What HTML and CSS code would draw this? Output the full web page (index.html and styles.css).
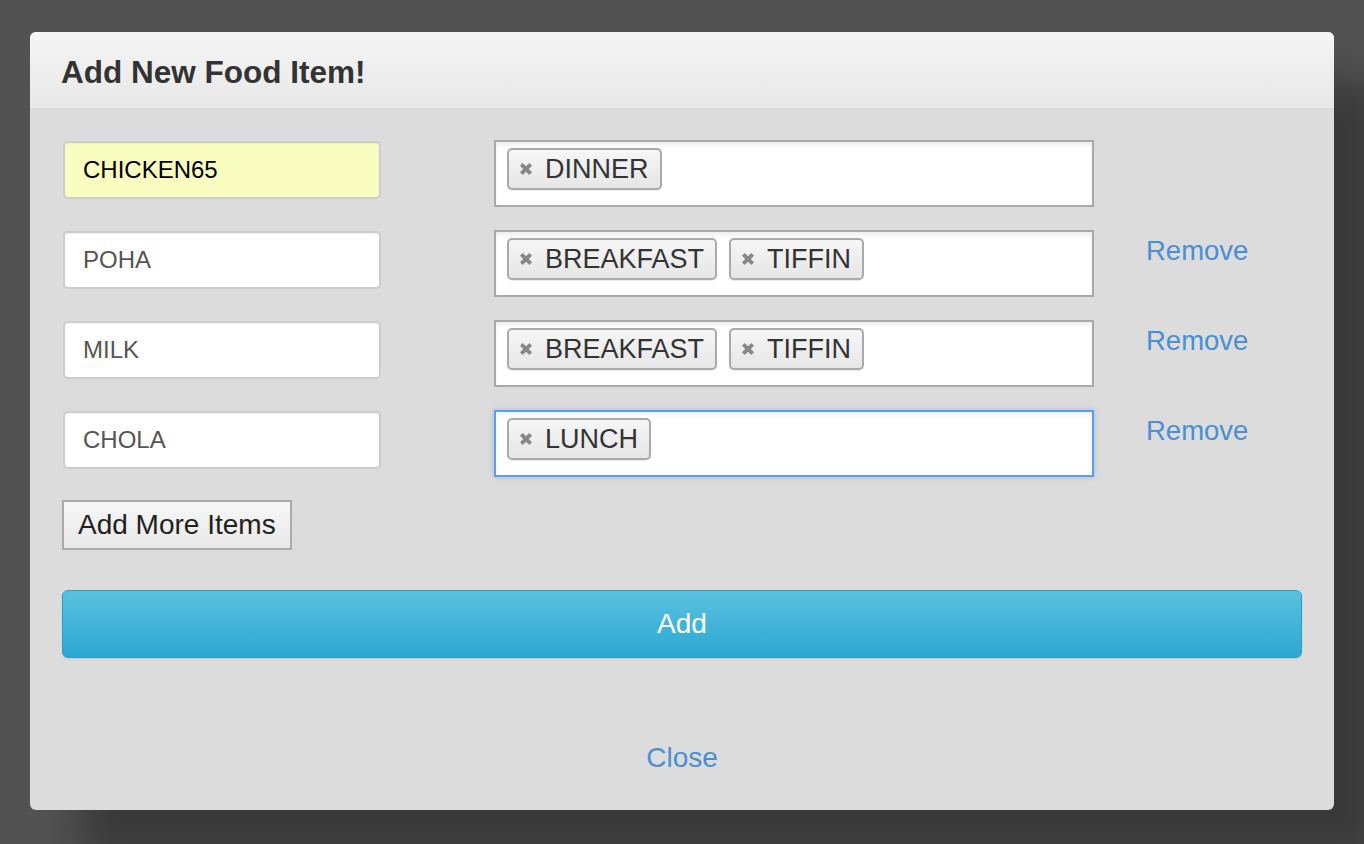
FILE: index.html
```html
<!DOCTYPE html>
<html>
<head>
<meta charset="utf-8">
<link rel="stylesheet" href="styles.css">
</head>
<body>
<div class="modal">
  <div class="modal-header"><h3 class="title">Add New Food Item!</h3></div>
  <div class="modal-body">
    <div class="rows">
      <div class="row">
        <div class="text-input autofill">CHICKEN65</div>
        <div class="tags-input">
          <span class="tag"><svg class="x" viewBox="0 0 12 12"><path d="M2 2L10 10M10 2L2 10"/></svg>DINNER</span>
        </div>
      </div>
      <div class="row">
        <div class="text-input">POHA</div>
        <div class="tags-input">
          <span class="tag"><svg class="x" viewBox="0 0 12 12"><path d="M2 2L10 10M10 2L2 10"/></svg>BREAKFAST</span>
          <span class="tag"><svg class="x" viewBox="0 0 12 12"><path d="M2 2L10 10M10 2L2 10"/></svg>TIFFIN</span>
        </div>
        <a class="remove">Remove</a>
      </div>
      <div class="row">
        <div class="text-input">MILK</div>
        <div class="tags-input">
          <span class="tag"><svg class="x" viewBox="0 0 12 12"><path d="M2 2L10 10M10 2L2 10"/></svg>BREAKFAST</span>
          <span class="tag"><svg class="x" viewBox="0 0 12 12"><path d="M2 2L10 10M10 2L2 10"/></svg>TIFFIN</span>
        </div>
        <a class="remove">Remove</a>
      </div>
      <div class="row">
        <div class="text-input">CHOLA</div>
        <div class="tags-input focused">
          <span class="tag"><svg class="x" viewBox="0 0 12 12"><path d="M2 2L10 10M10 2L2 10"/></svg>LUNCH</span>
        </div>
        <a class="remove">Remove</a>
      </div>
    </div>
    <button class="more-btn">Add More Items</button>
    <button class="add-btn">Add</button>
  </div>
  <div class="modal-footer"><a class="close">Close</a></div>
</div>
</body>
</html>
```

FILE: styles.css
```css
html, body {
  margin: 0;
  height: 100%;
}
body {
  background: #525252;
  font-family: "Liberation Sans", Arial, Helvetica, sans-serif;
  padding: 32px 30px 0;
  box-sizing: border-box;
  overflow: hidden;
}
.modal {
  width: 1304px;
  height: 778px;
  background: #dcdcdc;
  border-radius: 6px;
  box-shadow: 50px 50px 40px rgba(0, 0, 0, 0.3);
  display: flex;
  flex-direction: column;
  overflow: hidden;
}
.modal-header {
  height: 76px;
  box-sizing: border-box;
  background: linear-gradient(#f5f5f5, #e8e8e8);
  padding-left: 31px;
  display: flex;
  align-items: center;
}
.title {
  margin: 5px 0 0;
  font-size: 31.5px;
  font-weight: bold;
  color: #333;
}
.modal-body {
  padding: 32px 32px 0;
  display: flex;
  flex-direction: column;
  align-items: flex-start;
}
.rows {
  display: flex;
  flex-direction: column;
  gap: 23px;
}
.row {
  display: flex;
  align-items: flex-start;
  height: 67px;
}
.text-input {
  width: 318px;
  height: 58px;
  margin-top: 1px;
  margin-left: 1px;
  box-sizing: border-box;
  border: 2px solid #cdcdcd;
  border-radius: 5px;
  background: #fff;
  padding-left: 18px;
  display: flex;
  align-items: center;
  font-size: 24px;
  color: #555;
  box-shadow: inset 0 1px 2px rgba(0,0,0,0.06);
}
.text-input.autofill {
  background: #fafdc0;
  color: #000;
}
.tags-input {
  width: 600px;
  height: 67px;
  margin-left: 113px;
  box-sizing: border-box;
  border: 2px solid #a9a9a9;
  background: #fff;
  box-shadow: inset 0 3px 4px rgba(0,0,0,0.07);
  padding: 6px 0 0 11px;
  display: flex;
  align-items: flex-start;
  gap: 12px;
}
.tags-input.focused {
  border-color: #5e9cee;
  box-shadow: 0 0 5px rgba(94,156,238,0.5), inset 0 3px 4px rgba(0,0,0,0.07);
}
.tag {
  display: inline-flex;
  align-items: center;
  height: 42px;
  box-sizing: border-box;
  padding: 0 11px 0 10px;
  border: 2px solid #aaa;
  border-radius: 5px;
  background: linear-gradient(#f6f6f6, #e6e6e6);
  box-shadow: 0 1px 1px rgba(0,0,0,0.08);
  font-size: 27px;
  color: #333;
}
.x {
  width: 14px;
  height: 14px;
  margin-right: 12px;
  fill: none;
  stroke: #888;
  stroke-width: 3.4;
}
.remove {
  margin-left: 52px;
  margin-top: 5px;
  font-size: 27.5px;
  color: #4a8fd4;
  cursor: pointer;
}
.more-btn {
  margin-top: 23px;
  height: 50px;
  padding: 0 14px;
  border: 2px solid #aaa;
  border-radius: 0;
  background: linear-gradient(#f7f7f7, #e8e8e8);
  font-family: "Liberation Sans", Arial, sans-serif;
  font-size: 28px;
  color: #222;
}
.add-btn {
  margin-top: 40px;
  width: 1240px;
  height: 68px;
  border: 1px solid #28a1c9;
  border-radius: 6px;
  background: linear-gradient(#5bc1e0, #2ba8d3);
  box-shadow: 0 1px 2px rgba(0,0,0,0.08);
  font-family: "Liberation Sans", Arial, sans-serif;
  font-size: 28px;
  color: #fff;
}
.modal-footer {
  margin-top: 84px;
  text-align: center;
  line-height: 32px;
}
.close {
  font-size: 28px;
  color: #4a8fd4;
  cursor: pointer;
}
```
